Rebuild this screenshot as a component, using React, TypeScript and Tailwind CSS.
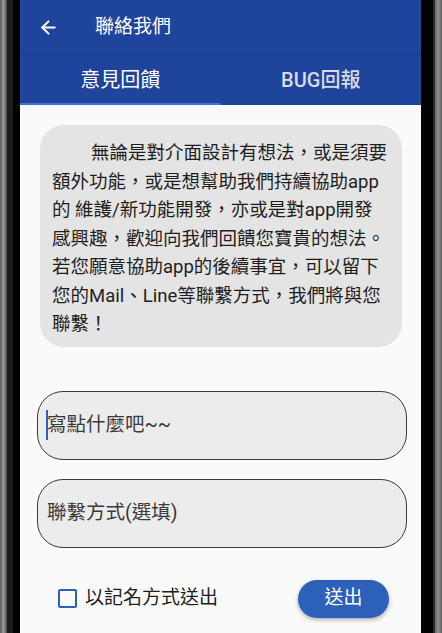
import { ArrowLeft } from "lucide-react";

const cjk = "font-['Roboto','Noto_Sans_CJK_TC',sans-serif]";

const Bezel = ({ side }: { side: "left" | "right" }) =>
  side === "left" ? (
    <div className="flex w-[20px] shrink-0">
      <div className="w-[7px] bg-gradient-to-r from-[#5a5a5a] via-[#9a9a9a] to-[#4a4a4a]" />
      <div className="w-[6px] bg-[#1c1c1c]" />
      <div className="w-[7px] bg-black" />
    </div>
  ) : (
    <div className="flex w-[21px] shrink-0">
      <div className="w-[12px] bg-black" />
      <div className="w-[2px] bg-[#2a2a2a]" />
      <div className="w-[7px] bg-gradient-to-r from-[#6a6a6a] via-[#8c8c8c] to-[#5a5a5a]" />
    </div>
  );

export default function App() {
  return (
    <div className={`flex h-[633px] w-[442px] overflow-hidden bg-black ${cjk}`}>
      <Bezel side="left" />
      <div className="flex flex-1 flex-col bg-[#fafafa]">
        {/* App bar */}
        <div className="flex h-[55px] items-center bg-[#1f449c] text-white">
          <ArrowLeft className="ml-[18px] h-[21px] w-[21px]" strokeWidth={2.4} />
          <span className="ml-[36px] text-[19px]">聯絡我們</span>
        </div>
        {/* Tabs */}
        <div className="flex h-[50px] flex-col border-t border-[#1b3d8e] bg-[#1f449c]">
          <div className="flex flex-1 items-center">
            <div className="flex-1 text-center text-[20px] text-white">意見回饋</div>
            <div className="flex-1 text-center text-[20px] font-medium text-[#d8dbe3]">BUG回報</div>
          </div>
          <div className="h-[2px] w-1/2 bg-[#3a74d0]" />
        </div>

        {/* Intro card */}
        <div className="ml-[20px] mr-[19px] mt-[20px] rounded-[24px] bg-[#e4e4e4] px-[12px] pb-[8px] pt-[14px] text-[18.5px] leading-[28.5px] text-[#1e1e1e]">
          <span className="ml-[39px]">無論是對介面設計有想法，或是須要</span>
          <br />
          額外功能，或是想幫助我們持續協助app
          <br />
          的 維護/新功能開發，亦或是對app開發
          <br />
          感興趣，歡迎向我們回饋您寶貴的想法。
          <br />
          若您願意協助app的後續事宜，可以留下
          <br />
          您的Mail、Line等聯繫方式，我們將與您
          <br />
          聯繫！
        </div>

        {/* Inputs */}
        <div className="ml-[17px] mr-[14px] mt-[44px] flex h-[69px] items-center rounded-[26px] border border-[#3a3a3a] bg-[#ececec] pl-[8px]">
          <span className="h-[30px] w-[2px] bg-[#2f5fc0]" />
          <span className="-ml-[1px] text-[19.5px] text-[#3a3a3a]">寫點什麼吧~~</span>
        </div>
        <div className="ml-[17px] mr-[14px] mt-[19px] flex h-[69px] items-center rounded-[26px] border border-[#3a3a3a] bg-[#ececec] pl-[9px]">
          <span className="text-[19.5px] text-[#3a3a3a]">聯繫方式(選填)</span>
        </div>

        {/* Footer */}
        <div className="mt-[32px] flex items-center justify-between pl-[38px] pr-[32px]">
          <label className="flex items-center gap-[8px] text-[19px] text-[#1e1e1e]">
            <span className="h-[19px] w-[19px] rounded-[2px] border-2 border-[#2d60b8]" />
            以記名方式送出
          </label>
          <button className="h-[38px] w-[91px] rounded-full bg-[#2d60b8] text-[19px] text-white shadow-[0_2px_4px_rgba(0,0,0,0.3)]">
            送出
          </button>
        </div>
      </div>
      <Bezel side="right" />
    </div>
  );
}
